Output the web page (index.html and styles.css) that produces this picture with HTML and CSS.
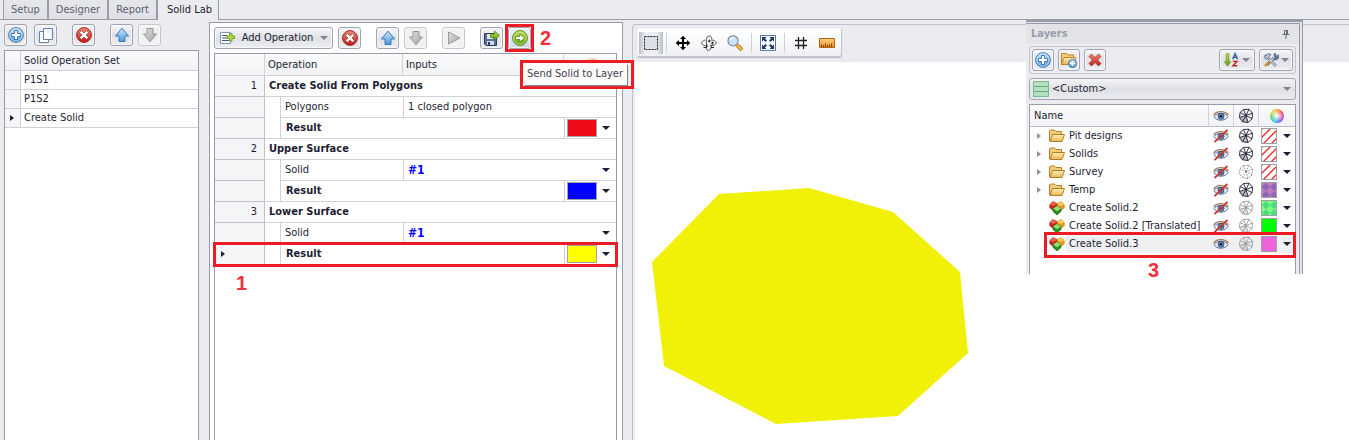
FILE: index.html
```html
<!DOCTYPE html>
<html lang="en">
<head>
<meta charset="utf-8">
<title>Solid Lab</title>
<link rel="stylesheet" href="styles.css">
</head>
<body>
<svg class="defs" width="0" height="0" aria-hidden="true">
  <defs>
    <linearGradient id="blue" x1="0" y1="0" x2="0" y2="1"><stop offset="0" stop-color="#d3e8fa"/><stop offset="1" stop-color="#4a97dc"/></linearGradient>
    <linearGradient id="red" x1="0" y1="0" x2="0" y2="1"><stop offset="0" stop-color="#ee8a7c"/><stop offset="1" stop-color="#c01c14"/></linearGradient>
    <linearGradient id="green" x1="0" y1="0" x2="0" y2="1"><stop offset="0" stop-color="#c3e25a"/><stop offset="1" stop-color="#5f9e12"/></linearGradient>
    <linearGradient id="grey" x1="0" y1="0" x2="1" y2="1"><stop offset="0" stop-color="#e3e3e3"/><stop offset="1" stop-color="#a2a2a2"/></linearGradient>
    <linearGradient id="gold" x1="0" y1="0" x2="0" y2="1"><stop offset="0" stop-color="#fff0b8"/><stop offset="1" stop-color="#e9b553"/></linearGradient>
    <linearGradient id="orange" x1="0" y1="0" x2="0" y2="1"><stop offset="0" stop-color="#fbd28a"/><stop offset="1" stop-color="#e58a1c"/></linearGradient>
    <pattern id="hatch" width="8" height="8" patternUnits="userSpaceOnUse"><path d="M-1 9 9-1M-1 1 1-1M7 9 9 7" stroke="#f02020" stroke-width="1.3"/></pattern>
    <pattern id="violet" width="8" height="8" patternUnits="userSpaceOnUse"><path fill="#c07cc0" d="M0 0h8v8H0z"/><path fill="#8a66b4" d="M4 0 8 4 4 8 0 4z"/></pattern>
    <pattern id="mint" width="8" height="8" patternUnits="userSpaceOnUse"><path fill="#84fb84" d="M0 0h8v8H0z"/><path fill="#4ade78" d="M4 0 8 4 4 8 0 4z"/></pattern>
  </defs>
  <symbol id="i-add" viewBox="0 0 16 16"><circle cx="8" cy="8" r="7.3" fill="url(#blue)" stroke="#3770b0"/><circle cx="8" cy="8" r="6.2" fill="none" stroke="#c7e0f6" stroke-width=".8"/><path d="M6.5 3.5h3v3h3v3h-3v3h-3v-3h-3v-3h3z" fill="#fff" stroke="#3474b8" stroke-width=".9"/></symbol>
  <symbol id="i-copy" viewBox="0 0 16 16"><path d="M1.5 4.500h9v11h-9z" fill="#fff" stroke="#5f7fc0"/><path d="M5.500 1.500h9v11h-9z" fill="#fff" stroke="#5f7fc0"/><path d="M6 2h8v10z" fill="#f2f5fc"/></symbol>
  <symbol id="i-delete" viewBox="0 0 16 16"><circle cx="8" cy="8" r="7.4" fill="url(#red)" stroke="#a82820"/><path d="M5.500 3.600 8 6l2.500-2.400 2 2L10.100 8l2.400 2.500-2 2L8 10.100l-2.500 2.400-2-2L5.900 8 3.500 5.600z" fill="#fff" stroke="#972019" stroke-width=".6"/></symbol>
  <symbol id="i-up" viewBox="0 0 16 16"><path d="M8 1.200 14.500 9h-3.500v5.500H5V9H1.500z" fill="url(#blue)" stroke="#3878b8"/></symbol>
  <symbol id="i-down" viewBox="0 0 16 16"><path d="M8 14.800 1.500 7H5V1.500h6V7h3.500z" fill="url(#grey)" stroke="#969696"/></symbol>
  <symbol id="i-play" viewBox="0 0 16 16"><path d="M2.500 2 14 8 2.500 14z" fill="url(#grey)" stroke="#999"/></symbol>
  <symbol id="i-save" viewBox="0 0 16 16"><path d="M.5 3.500h12v12H2l-1.500-1.500z" fill="#5b6f94" stroke="#2c3c5c"/><path d="M3 4h6v5H3z" fill="#e6edf8"/><path d="M3 11h7v4H3z" fill="#d5d9e0"/><path d="M4 12h2v3H4z" fill="#2c3c5c"/><path d="M6.500 4h4V1l5 4.500-5 4.500V7.500h-4z" fill="url(#green)" stroke="#4c8a14" stroke-width=".8"/></symbol>
  <symbol id="i-send" viewBox="0 0 16 16"><circle cx="8" cy="8" r="7.400" fill="url(#green)" stroke="#568c18"/><circle cx="8" cy="8" r="6.200" fill="none" stroke="#d5eb90" stroke-width=".8"/><path d="M3.500 6.500h4.300V4L12.500 8l-4.700 4V9.500H3.500z" fill="#fff" stroke="#568c18" stroke-width=".8"/></symbol>
  <symbol id="i-list" viewBox="0 0 16 16"><path d="M1.500 2.500h10v11h-10z" fill="#fff" stroke="#8494b6"/><path d="M3 5.500h5M3 8h5M3 10.500h7" stroke="#44597f"/><path d="M10.500 3.500h2.500V6h2.500v2.500H13V11h-2.500V8.500H8V6h2.500z" fill="#b5dc3c" stroke="#5d9612" stroke-width=".8"/></symbol>
  <symbol id="i-marquee" viewBox="0 0 16 16"><path d="M1.500 1.500h13v13h-13z" fill="#dcdfe4" stroke="#222" stroke-dasharray="2 1"/></symbol>
  <symbol id="i-move" viewBox="0 0 16 16"><path d="M8 .8 11 4H9v3h3V5l3.300 3L12 11V9H9v3h2l-3 3.200L5 12h2V9H4v2L.7 8 4 5v2h3V4H5z"/></symbol>
  <symbol id="i-orbit" viewBox="0 0 16 16"><g fill="none" stroke="#555"><path d="M5 12C5.500 17 9 16 10 13M11 6C11.500 0 5.500-1 5.300 5c0 3 .4 5 1.200 7"/><path d="M4 5C-.5 6.500-.5 10 4.500 10.800M12 5c5 2 4 5-2 5.800"/><path d="M2.500 12.500h3v-3M13 12.500h-3v-3" stroke="#222"/></g><path d="M6.800 6h3M8.300 4.500v3M10 8h3M11.500 6.500v3" stroke="#333"/></symbol>
  <symbol id="i-search" viewBox="0 0 16 16"><path d="m9.500 9.500 5.500 5.500" stroke="#a36b16" stroke-width="3.800"/><path d="m9.500 9.500 5.200 5.200" stroke="#f5bd39" stroke-width="2.400"/><circle cx="6" cy="5.800" r="5" fill="#cbe4f8" stroke="#7e8da8" stroke-width="1.300"/><path d="M3 5c.8-2 3-2.500 4.500-2" stroke="#fff" stroke-width="1.300" fill="none"/></symbol>
  <symbol id="i-fit" viewBox="0 0 16 16"><path d="M.5.5h15v15H.5z" fill="#f4f8fd" stroke="#5478aa"/><path fill="#223a5e" d="M2 2h4.500L5 3.500 7 5.500 5.500 7 3.500 5 2 6.500zM14 2v4.500L12.500 5l-2 2L9 5.500l2-2L9.500 2zM2 14V9.500L3.500 11l2-2L7 10.500l-2 2L6.500 14zM14 14H9.500l1.500-1.500-2-2L10.500 9l2 2L14 9.500z"/></symbol>
  <symbol id="i-grid" viewBox="0 0 16 16"><path d="M5.500 2v12M10.500 2v12M2 5.500h12M2 10.500h12" stroke="#222" stroke-width="1.300"/></symbol>
  <symbol id="i-ruler" viewBox="0 0 16 16"><path d="M.5 3.500h15v9H.5z" fill="url(#orange)" stroke="#b4640f"/><path d="M2.500 12V9.500M4.500 12v-2M6.500 12V8.500M8.500 12v-2M10.500 12V9.500M12.500 12V8.500" stroke="#8a480a"/></symbol>
  <symbol id="i-folder" viewBox="0 0 16 16"><path d="M.5 13V3l1-1h4L7 3.500h5.500V6.500" fill="#f3cd78" stroke="#b07f2c"/><path d="M3.500 6.500h12L13 13.500H1z" fill="url(#gold)" stroke="#b07f2c"/></symbol>
  <symbol id="i-addfolder" viewBox="0 0 16 16"><path d="M.5 12.500V1.500h5L7 3h5.500v3" fill="#f7cf7a" stroke="#c28328"/><path d="M3 5.500h11.500l-2 7H.5z" fill="url(#gold)" stroke="#c28328"/><circle cx="11.500" cy="11.500" r="4" fill="url(#blue)" stroke="#3770b0"/><path d="M11.500 9v5M9 11.500h5" stroke="#fff" stroke-width="1.400"/></symbol>
  <symbol id="i-cross" viewBox="0 0 16 16"><path d="M4.500 2 8 5.500 11.500 2 14 4.500 10.500 8l3.500 3.500-2.500 2.500L8 10.500 4.500 14 2 11.500 5.500 8 2 4.500z" fill="url(#red)" stroke="#b03226" stroke-width=".8"/></symbol>
  <symbol id="i-sort" viewBox="0 0 18 16"><path d="M2.500 1h3v9h2L4 15 .5 10h2z" fill="url(#green)" stroke="#5c8e1c" stroke-width=".8"/><path d="M9.800 7 12.500.8 15.200 7M10.800 5h3.400" fill="none" stroke="#3556a4" stroke-width="1.500"/><path d="M10 9.500h4.800L10 14.500h5" fill="none" stroke="#c32222" stroke-width="1.500"/></symbol>
  <symbol id="i-tools" viewBox="0 0 16 16"><path d="m2 3 11 11M12.500 1.500a3 3 0 0 0 1 4l1.500-1a3.200 3.200 0 0 1-5 2L4 13" fill="none" stroke="#66738a" stroke-width="2.600"/><path d="m3 4 10 10M10.500 6 4 12" stroke="#d5deea" stroke-width="1.100"/><path d="M1 5.500 5 1.500l3 1-4.500 5z" fill="#b8c4d6" stroke="#59667e" stroke-width=".8"/><path d="M6.500 9.500 2 14" stroke="#d5852e" stroke-width="2.400"/></symbol>
  <symbol id="i-pin" viewBox="0 0 10 10"><path d="M3.500 1.500h3v4h-3zM1.500 5.500h7M5 6v4" fill="none" stroke="#666a78"/><path d="M5 1h2v5H5z" fill="#666a78"/></symbol>
  <symbol id="i-eye" viewBox="0 0 16 16"><path d="M1 8.500C3.500 4.500 12 4 15 8.500c-3 5-11.500 5-14 0z" fill="#eef3fb" stroke="#5b6d98"/><path d="M.8 7C3.500 2.500 12 2.500 15.300 7" fill="none" stroke="#a87954" stroke-width="1.400"/><circle cx="8" cy="8.300" r="3" fill="#6f94c4" stroke="#32507c"/><circle cx="8" cy="8.300" r="1.300" fill="#111"/></symbol>
  <symbol id="i-hidden" viewBox="0 0 16 16"><use href="#i-eye" width="16" height="16"/><path d="M1.500 14 14.500 2" stroke="#cc3a34" stroke-width="1.800"/></symbol>
  <symbol id="i-mesh" viewBox="0 0 16 16"><path d="M5.500 1.500 11 1.200l3.500 4-.4 5.500L10 14.500l-5.500-.7L1.500 9.500 2 4.500zM8 7.500 5.500 1.500M8 7.500l3-6.300M8 7.500l6.500-2.300M8 7.500l6.100 3.200M8 7.500l2 7M8 7.500l-3.500 6.300M8 7.500l-6.500 2M8 7.500l-6-3" fill="none" stroke="currentColor" stroke-width=".9"/><path d="M8 7.500 1.500 9.500 4.500 13.800 10 14.500z" fill="currentColor" opacity=".3"/></symbol>
  <symbol id="i-meshdots" viewBox="0 0 16 16"><path d="M5.500 1.500 11 1.200l3.500 4-.4 5.500L10 14.500l-5.500-.7L1.500 9.500 2 4.500zM8 7.500 5.500 1.500M8 7.500l6.500-2.300M8 7.500l6.100 3.200M8 7.500l-3.500 6.300M8 7.500l-6-3M8 7.500l2 7M8 7.500l3-6.300" fill="none" stroke="#888" stroke-dasharray="1.500 1.200"/></symbol>
  <symbol id="i-solid" viewBox="0 0 16 16"><path d="M.8 4.500 4 1.600l4 2v5l-3.500 2L.8 7.800z" fill="#cf2418" stroke="#8e140c" stroke-width=".6"/><path d="M.8 4.500 4 1.600l4 2-3.500 2.500z" fill="#f0604c"/><path d="M15.200 4.500 12 1.600l-4 2v5l3.500 2 3.700-2.800z" fill="#f0981a" stroke="#b06c10" stroke-width=".6"/><path d="M15.200 4.500 12 1.600l-4 2 3.500 2.500z" fill="#ffcc58"/><path d="M4 8.500 8 6l4 2.500v3L8 15l-4-3.500z" fill="#2a8e1c" stroke="#175c0c" stroke-width=".6"/><path d="M4 8.500 8 6l4 2.500-4 2.700z" fill="#8ee070"/></symbol>
</svg>

<nav class="tabs" role="tablist">
  <button class="tab" role="tab">Setup</button>
  <button class="tab" role="tab">Designer</button>
  <button class="tab" role="tab">Report</button>
  <button class="tab active" role="tab" aria-selected="true">Solid Lab</button>
  <span class="tab-fill"></span>
</nav>

<main class="workspace">
  <section class="sets">
    <div class="toolbar">
      <button class="btn" aria-label="Add set"><svg><use href="#i-add"/></svg></button>
      <button class="btn" aria-label="Copy set"><svg><use href="#i-copy"/></svg></button>
      <button class="btn apart" aria-label="Delete set"><svg><use href="#i-delete"/></svg></button>
      <button class="btn apart" aria-label="Move up"><svg><use href="#i-up"/></svg></button>
      <button class="btn off tight" aria-label="Move down" disabled><svg><use href="#i-down"/></svg></button>
    </div>
    <div class="grid">
      <table class="set-table">
        <colgroup><col class="c-mark"><col></colgroup>
        <thead><tr><th></th><th>Solid Operation Set</th></tr></thead>
        <tbody>
          <tr><th></th><td>P1S1</td></tr>
          <tr><th></th><td>P1S2</td></tr>
          <tr><th><i class="mark"></i></th><td>Create Solid</td></tr>
        </tbody>
      </table>
    </div>
  </section>

  <section class="operations">
    <div class="toolbar">
      <button class="btn wide"><svg><use href="#i-list"/></svg>Add Operation<i class="caret soft"></i></button>
      <button class="btn tight" aria-label="Delete operation"><svg><use href="#i-delete"/></svg></button>
      <button class="btn apart" aria-label="Move up"><svg><use href="#i-up"/></svg></button>
      <button class="btn off tight" aria-label="Move down" disabled><svg><use href="#i-down"/></svg></button>
      <button class="btn off apart" aria-label="Run" disabled><svg><use href="#i-play"/></svg></button>
      <button class="btn apart" aria-label="Save solid"><svg><use href="#i-save"/></svg></button>
      <button class="btn tight hot ringed" aria-label="Send Solid to Layer"><svg><use href="#i-send"/></svg></button>
      <span class="step">2</span>
    </div>
    <div class="tooltip" role="tooltip"><span>Send Solid to Layer</span></div>
    <div class="grid">
      <table class="op-table">
        <colgroup><col class="c-num"><col class="c-indent"><col class="c-op"><col><col class="c-color"></colgroup>
        <thead><tr><th></th><th colspan="2">Operation</th><th>Inputs</th><th><i class="wheel"></i></th></tr></thead>
        <tbody>
          <tr class="group"><th>1</th><td colspan="4">Create Solid From Polygons</td></tr>
          <tr><th></th><td class="indent"></td><td>Polygons</td><td colspan="2">1 closed polygon</td></tr>
          <tr class="result"><th></th><td class="indent last"></td><td colspan="2">Result</td><td><div class="pick"><i class="swatch s-red"></i><button class="drop" aria-label="Choose colour"><i class="caret"></i></button></div></td></tr>
          <tr class="group"><th>2</th><td colspan="4">Upper Surface</td></tr>
          <tr><th></th><td class="indent"></td><td>Solid</td><td colspan="2"><div class="pick ref"><b>#1</b><button class="drop" aria-label="Choose solid"><i class="caret"></i></button></div></td></tr>
          <tr class="result"><th></th><td class="indent last"></td><td colspan="2">Result</td><td><div class="pick"><i class="swatch s-blue"></i><button class="drop" aria-label="Choose colour"><i class="caret"></i></button></div></td></tr>
          <tr class="group"><th>3</th><td colspan="4">Lower Surface</td></tr>
          <tr><th></th><td class="indent"></td><td>Solid</td><td colspan="2"><div class="pick ref"><b>#1</b><button class="drop" aria-label="Choose solid"><i class="caret"></i></button></div></td></tr>
          <tr class="result ringed-row"><th class="current"><i class="mark"></i></th><td class="indent last"></td><td colspan="2">Result</td><td><div class="pick"><i class="swatch s-yellow"></i><button class="drop" aria-label="Choose colour"><i class="caret"></i></button></div></td></tr>
        </tbody>
      </table>
      <span class="step step-one">1</span>
    </div>
  </section>

  <section class="viewport">
    <div class="view-tools">
      <button class="tool on" aria-label="Select"><svg><use href="#i-marquee"/></svg></button>
      <i class="sep"></i>
      <button class="tool" aria-label="Pan"><svg><use href="#i-move"/></svg></button>
      <button class="tool" aria-label="Orbit"><svg><use href="#i-orbit"/></svg></button>
      <button class="tool" aria-label="Zoom"><svg><use href="#i-search"/></svg></button>
      <i class="sep"></i>
      <button class="tool" aria-label="Fit"><svg><use href="#i-fit"/></svg></button>
      <i class="sep"></i>
      <button class="tool" aria-label="Grid"><svg><use href="#i-grid"/></svg></button>
      <button class="tool" aria-label="Measure"><svg><use href="#i-ruler"/></svg></button>
    </div>
    <div class="canvas">
      <svg width="340" height="378" viewBox="0 0 340 378" role="img" aria-label="Solid"><path d="M84 132 174 126 258 150 325 210 333 291 263 354 141 362 29 304 17 200z" fill="#f1f107"/></svg>
    </div>
  </section>
</main>

<aside class="layers">
  <div class="layers-body">
    <h2>Layers<button class="pin" aria-label="Pin panel"><svg><use href="#i-pin"/></svg></button></h2>
    <div class="layer-tools">
      <button class="btn" aria-label="Add layer"><svg><use href="#i-add"/></svg></button>
      <button class="btn" aria-label="Add folder"><svg><use href="#i-addfolder"/></svg></button>
      <button class="btn" aria-label="Delete layer"><svg><use href="#i-cross"/></svg></button>
      <span class="grow"></span>
      <button class="btn split" aria-label="Sort"><svg><use href="#i-sort"/></svg><i class="caret soft"></i></button>
      <button class="btn split" aria-label="Settings"><svg><use href="#i-tools"/></svg><i class="caret soft"></i></button>
    </div>
    <div class="combo">
      <i class="combo-icon"></i>
      <select aria-label="Layer view"><option>&lt;Custom&gt;</option></select>
      <i class="caret soft"></i>
    </div>
    <div class="grid">
      <table class="layer-table">
        <colgroup><col><col class="c-eye"><col class="c-mesh"><col class="c-fill"></colgroup>
        <thead><tr><th>Name</th><th><svg><use href="#i-eye"/></svg></th><th><svg><use href="#i-mesh"/></svg></th><th><i class="wheel"></i></th></tr></thead>
        <tbody>
          <tr><td><div class="name"><i class="twist"></i><svg><use href="#i-folder"/></svg>Pit designs</div></td><td><svg><use href="#i-hidden"/></svg></td><td><svg><use href="#i-mesh"/></svg></td><td><div class="fill"><svg class="box"><rect width="16" height="16" fill="url(#hatch)"/></svg><button class="drop" aria-label="Choose fill"><i class="caret"></i></button></div></td></tr>
          <tr><td><div class="name"><i class="twist"></i><svg><use href="#i-folder"/></svg>Solids</div></td><td><svg><use href="#i-hidden"/></svg></td><td><svg><use href="#i-mesh"/></svg></td><td><div class="fill"><svg class="box"><rect width="16" height="16" fill="url(#hatch)"/></svg><button class="drop" aria-label="Choose fill"><i class="caret"></i></button></div></td></tr>
          <tr><td><div class="name"><i class="twist"></i><svg><use href="#i-folder"/></svg>Survey</div></td><td><svg><use href="#i-hidden"/></svg></td><td><svg><use href="#i-meshdots"/></svg></td><td><div class="fill"><svg class="box"><rect width="16" height="16" fill="url(#hatch)"/></svg><button class="drop" aria-label="Choose fill"><i class="caret"></i></button></div></td></tr>
          <tr><td><div class="name"><i class="twist"></i><svg><use href="#i-folder"/></svg>Temp</div></td><td><svg><use href="#i-hidden"/></svg></td><td><svg><use href="#i-mesh"/></svg></td><td><div class="fill"><svg class="box"><rect width="16" height="16" fill="url(#violet)"/></svg><button class="drop" aria-label="Choose fill"><i class="caret"></i></button></div></td></tr>
          <tr><td><div class="name leaf"><svg><use href="#i-solid"/></svg>Create Solid.2</div></td><td><svg><use href="#i-hidden"/></svg></td><td class="dim"><svg><use href="#i-mesh"/></svg></td><td><div class="fill"><svg class="box"><rect width="16" height="16" fill="url(#mint)"/></svg><button class="drop" aria-label="Choose fill"><i class="caret"></i></button></div></td></tr>
          <tr><td><div class="name leaf"><svg><use href="#i-solid"/></svg>Create Solid.2 [Translated]</div></td><td><svg><use href="#i-hidden"/></svg></td><td class="dim"><svg><use href="#i-mesh"/></svg></td><td><div class="fill"><svg class="box"><rect width="16" height="16" fill="#0f0"/></svg><button class="drop" aria-label="Choose fill"><i class="caret"></i></button></div></td></tr>
          <tr class="picked"><td><div class="name leaf"><svg><use href="#i-solid"/></svg>Create Solid.3</div></td><td><svg><use href="#i-eye"/></svg></td><td class="dim"><svg><use href="#i-mesh"/></svg></td><td><div class="fill"><svg class="box"><rect width="16" height="16" fill="#ee62dc"/></svg><button class="drop" aria-label="Choose fill"><i class="caret"></i></button></div></td></tr>
        </tbody>
      </table>
      <span class="ring"></span>
      <span class="step step-three">3</span>
    </div>
  </div>
</aside>
</body>
</html>
```
FILE: styles.css
```css
* { box-sizing: border-box; }

:root {
  --bg: #ebecef;
  --line: #9a9ba8;
  --cell: #d0d2d9;
  --ink: #1e1e32;
  --red: #ed1c24;
}

body {
  margin: 0;
  height: 100vh;
  display: flex;
  flex-direction: column;
  position: relative;
  overflow: hidden;
  background: var(--bg);
  color: var(--ink);
  font: 11px/16px "DejaVu Sans Condensed", "DejaVu Sans", sans-serif;
}

button, select { font: inherit; color: inherit; }
button { padding: 0; border: 0; background: none; }
svg { width: 16px; height: 16px; flex: none; display: block; }
.defs { position: absolute; width: 0; height: 0; }

/* Tabs */
.tabs { display: flex; height: 20px; }
.tabs::before { content: ""; width: 3px; border-bottom: 1px solid var(--line); }
.tab {
  padding: 0 7px;
  border-right: 2px solid var(--line);
  border-bottom: 1px solid var(--line);
  background: linear-gradient(#e6e7eb, #dfe0e5);
  color: #5c5f70;
}
.tab:first-child { border-left: 1px solid var(--line); }
.tab.active { padding: 0 6px 0 9px; background: none; border-right-width: 1px; border-bottom: 0; color: var(--ink); }
.tab-fill { flex: 1; border-bottom: 1px solid var(--line); }

.workspace { flex: 1; display: flex; min-height: 0; }

/* Buttons */
.toolbar { display: flex; align-items: center; height: 22px; margin-bottom: 4px; }
.btn {
  display: flex;
  align-items: center;
  justify-content: center;
  flex: none;
  width: 23px;
  height: 22px;
  border: 1px solid #a2a4b0;
  border-radius: 3px;
  background: linear-gradient(#f6f7f9, #dfe1e6 50%, #eceef1);
  box-shadow: inset 0 0 0 1px #f7f8fa;
}
.btn + .btn { margin-left: 7px; }
.btn + .btn.apart { margin-left: 15px; }
.btn + .btn.tight { margin-left: 5px; }
.btn.off { border-color: #c5c6cd; background: #f0f1f3; }
.btn.hot { background: linear-gradient(#eef2fc, #ccd8f4); }
.btn.wide { width: 119px; justify-content: space-between; padding: 0 4px; }
.btn.ringed { position: relative; }
.btn.ringed::after { content: ""; position: absolute; inset: -4px; border: 3px solid var(--red); }
.caret { flex: none; border: 4px solid transparent; border-top-color: var(--ink); border-bottom: 0; }
.caret.soft { border-top-color: #80828e; }
.mark { display: inline-block; border: 3px solid transparent; border-left: 4px solid var(--ink); border-right: 0; }

/* Tables */
.grid { flex: 1; position: relative; border: 1px solid var(--line); border-bottom: 0; background: #fff; }
table { width: 100%; table-layout: fixed; border-collapse: separate; border-spacing: 0; }
th, td { padding: 0; font-weight: normal; text-align: left; white-space: nowrap; }
thead th { background: linear-gradient(#fbfbfc, #f1f2f5); border-right: 1px solid var(--cell); border-bottom: 1px solid #b9bbc5; }
thead th:last-child { border-right: 0; }

.sets { width: 209px; padding: 4px 10px 0 4px; display: flex; flex-direction: column; }
.c-mark { width: 16px; }
.set-table th, .set-table td { height: 19px; padding-left: 3px; border-bottom: 1px solid var(--cell); }
.set-table thead th { height: 20px; }
.set-table tbody th { padding-left: 5px; border-right: 1px solid var(--cell); background: #f4f5f7; }

.operations {
  width: 414px;
  margin-top: 2px;
  padding: 4px 5px 0 4px;
  display: flex;
  flex-direction: column;
  position: relative;
  border: 1px solid var(--line);
  border-bottom: 0;
  background: #fff;
}
.c-num { width: 50px; }
.c-indent { width: 16px; }
.c-op { width: 122px; }
.c-color { width: 52px; }
.op-table th, .op-table td { height: 21px; padding-left: 4px; border-bottom: 1px solid var(--cell); }
.op-table thead th { height: 22px; padding-left: 3px; }
.op-table tbody th { padding-right: 7px; text-align: right; border-right: 1px solid #bfc1ca; border-bottom-color: #bfc1ca; background: #f4f5f7; }
.op-table tbody th.current { padding-left: 6px; text-align: left; }
.op-table td.indent { border-bottom: 0; border-right: 1px solid var(--cell); }
.op-table td.last { border-bottom: 1px solid var(--cell); }
.op-table td + td + td { border-left: 1px solid var(--cell); }
.group td, .result td { font-weight: bold; }
.op-table .result td + td { padding-left: 5px; }
.op-table .result td:last-child { padding-left: 2px; }
.pick { display: flex; align-items: center; justify-content: space-between; padding-right: 6px; }
.pick.ref { color: #00f; font-size: 12px; }
.drop { display: flex; }
.swatch { width: 30px; height: 18px; border: 1px solid #a3a3a8; }
.s-red { background: #ee0c18; }
.s-blue { background: #00f; }
.s-yellow { background: #ff0; }
.ringed-row { outline: 3px solid var(--red); outline-offset: -1px; }
.wheel {
  display: block;
  width: 14px;
  height: 14px;
  margin: 0 auto;
  border-radius: 50%;
  background: radial-gradient(#fff, transparent 70%), conic-gradient(#f8a040, #f04848, #d040d0, #5060e8, #30c8e0, #40d070, #d0e040, #f8a040);
}
.op-table .wheel { opacity: .5; }

/* Callouts */
.step { color: #f0303a; font: bold 20px/20px "Liberation Sans Narrow", "Liberation Sans", sans-serif; }
.toolbar .step { margin-left: 9px; }
.step-one { position: absolute; left: 21px; top: 219px; }
.step-three { position: absolute; left: 118px; top: 155px; }
.ring { position: absolute; left: 14px; right: -1px; top: 127px; height: 26px; border: 3px solid var(--red); }
.tooltip { position: absolute; z-index: 2; left: 310px; top: 37px; padding: 1px 4px 1px 1px; border: 3px solid var(--red); background: #f4f4f6; white-space: nowrap; }
.tooltip span { display: block; padding: 2px 4px 3px 3px; background: #fbfbfc; box-shadow: 1px 1px 1px #888; color: #44444f; }

/* Viewport */
.viewport {
  flex: 1;
  min-width: 0;
  margin: 4px 0 0 9px;
  padding-left: 2px;
  display: flex;
  flex-direction: column;
  border: 1px solid #bfc0c9;
  border-width: 1px 0 0 1px;
  border-top-left-radius: 4px;
}
.view-tools {
  display: flex;
  align-items: center;
  align-self: flex-start;
  height: 29px;
  margin: 3px 0 5px 2px;
  padding: 0 1px;
  border: 1px solid #c3c5cd;
  border-top-color: #f4f5f7;
  border-left-color: #f4f5f7;
  border-radius: 3px;
  background: linear-gradient(#fff, #f0f1f4);
  box-shadow: 0 1px 1px #b6b8c2;
}
.tool { display: flex; align-items: center; justify-content: center; width: 26px; height: 22px; }
.tool.on { width: 24px; background: linear-gradient(90deg, #b9bcc8, #eceef2 25%, #eceef2 75%, #b9bcc8); }
.sep { width: 1px; height: 20px; margin: 0 3px; background: #d0d2d9; }
.canvas { flex: 1; min-height: 0; background: #fff; }
.canvas svg { width: 340px; height: 378px; }

/* Layers panel */
.layers {
  position: absolute;
  right: 46px;
  top: 20px;
  width: 277px;
  height: 254px;
  border: 1px solid var(--line);
  border-width: 2px 1px 0 0;
  padding: 1px 2px 0 0;
  background: #e3e4e9;
}
.layers-body {
  height: 100%;
  display: flex;
  flex-direction: column;
  padding: 0 3px;
  border: 1px solid var(--line);
  border-width: 1px 1px 0 0;
  background: var(--bg);
}
.layers h2 { display: flex; align-items: center; justify-content: space-between; height: 20px; margin: 0 -3px 2px; padding: 0 8px 0 5px; background: #e3e4e8; color: #9a9ca8; font-size: 11px; font-weight: bold; }
.pin svg { width: 10px; height: 10px; }
.layer-tools { display: flex; align-items: center; height: 28px; margin-bottom: 4px; padding: 0 2px; border: 1px solid #c3c4cc; border-radius: 3px; }
.layer-tools .btn { width: 22px; }
.layer-tools .btn + .btn { margin-left: 4px; }
.layer-tools .btn.split { width: 36px; gap: 2px; }
.layer-tools .btn.split + .btn.split { width: 34px; }
.grow { flex: 1; }
.combo {
  display: flex;
  align-items: center;
  height: 22px;
  margin-bottom: 4px;
  padding: 0 4px 0 3px;
  border: 1px solid #a2a4b0;
  border-radius: 3px;
  background: linear-gradient(#f3f4f6, #dfe0e5 50%, #ebecef);
}
.combo-icon { width: 16px; height: 16px; border: 1px solid #7fb690; background: linear-gradient(#b5e0bf 4px, #6aa880 4px 5px, #b5e0bf 5px 9px, #6aa880 9px 10px, #b5e0bf 10px); }
.combo select { flex: 1; padding: 0 3px; border: 0; background: none; appearance: none; }
.c-eye, .c-mesh { width: 25px; }
.c-fill { width: 36px; }
.layer-table th, .layer-table td { height: 18px; }
.layer-table thead th { height: 22px; padding-left: 4px; }
.layer-table tbody td + td { padding-left: 4px; }
.layer-table tbody td:last-child { padding-left: 2px; }
.layer-table .wheel { margin: 0 auto 0 7px; }
.name { display: flex; align-items: center; gap: 4px; padding-left: 7px; }
.name.leaf { padding-left: 19px; }
.twist { width: 4px; margin-right: 4px; border: 3px solid transparent; border-left: 4px solid #8d8f9a; border-right: 0; }
.fill { display: flex; align-items: center; justify-content: space-between; padding-right: 4px; }
.box { border: 1px solid #a0a0a4; }
.layer-table td.dim { color: #999; }
.picked td { background: #f0f0f2; }
.picked td:first-child { background: linear-gradient(90deg, #fff 36px, #f0f0f2 36px); }
```
